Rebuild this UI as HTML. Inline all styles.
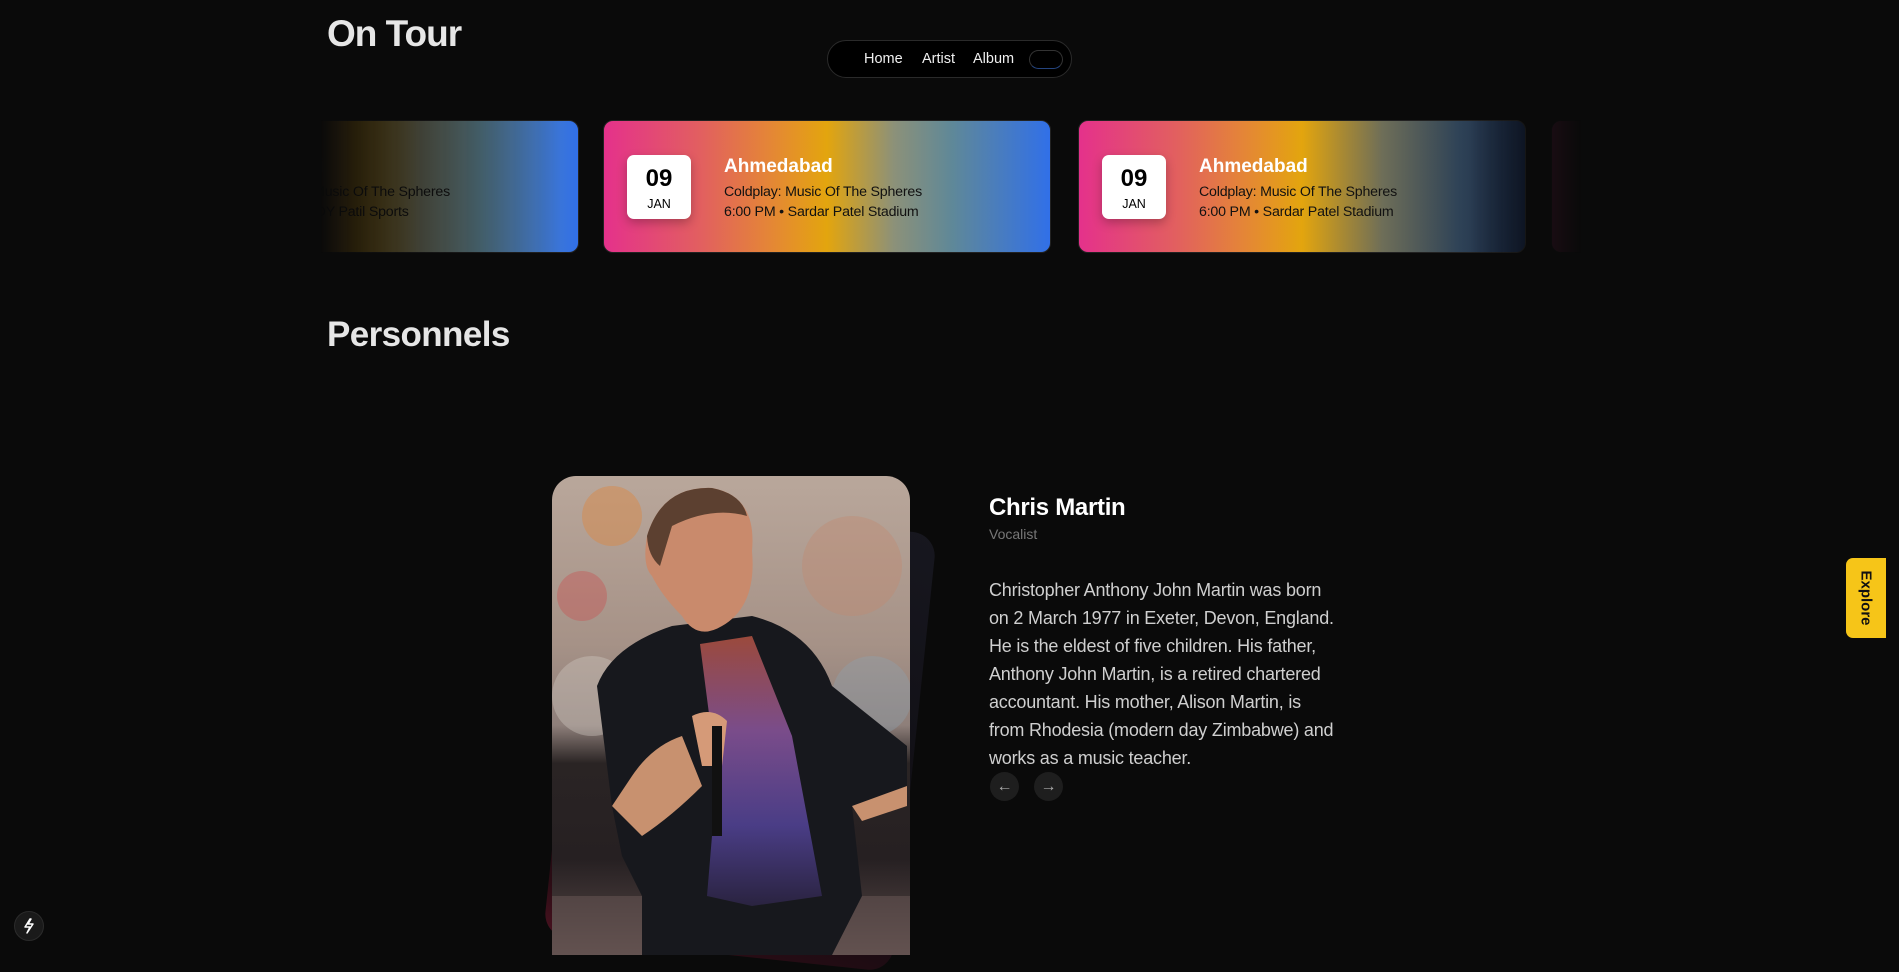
<!DOCTYPE html>
<html><head><meta charset="utf-8"><style>
*{margin:0;padding:0;box-sizing:border-box}
html,body{width:1899px;height:955px;overflow:hidden;background:#0a0a0a;font-family:"Liberation Sans",sans-serif;color:#fff}
.abs{position:absolute}
h1{position:absolute;left:327px;top:13px;font-size:37px;font-weight:700;color:#e6e6e6;letter-spacing:-1px}
h2{position:absolute;left:327px;top:315px;font-size:35px;font-weight:700;color:#e6e6e6;letter-spacing:-0.6px}
.nav{left:827px;top:40px;width:245px;height:38px;border:1px solid #2a2a2a;border-radius:20px;background:#000}
.nav span{position:absolute;top:10px;font-size:14.5px;color:#f0f0f0}
.tog{position:absolute;left:201px;top:9px;width:34px;height:19px;border:1px solid #333;border-radius:10px;background:#000;border-bottom-color:#24447f}
.strip{left:320px;top:118px;width:1262px;height:137px;overflow:hidden;-webkit-mask-image:linear-gradient(90deg,transparent 0,rgba(0,0,0,.15) 40px,#000 240px,#000 1150px,transparent 1262px);mask-image:linear-gradient(90deg,transparent 0,rgba(0,0,0,.15) 40px,#000 240px,#000 1150px,transparent 1262px)}
.card{position:absolute;top:2px;width:448px;height:133px;border-radius:10px;border:1px solid #222;background:linear-gradient(90deg,#e4318b 0%,#e2605f 22%,#e48834 38%,#e3a50e 50%,#8c9179 65%,#5f8898 78%,#3170e8 100%)}
.card.b{background:linear-gradient(90deg,#e4318b 0%,#e2605f 22%,#e48834 38%,#e3a50e 50%,#6e6e58 68%,#2f4357 85%,#13213d 100%)}
.date{position:absolute;left:23px;top:34px;width:64px;height:64px;background:#fff;border-radius:7px;text-align:center;color:#000;box-shadow:0 4px 10px rgba(0,0,0,.25)}
.date b{display:block;font-size:24px;margin-top:10px}
.date i{display:block;font-style:normal;font-size:12.5px;margin-top:4px}
.city{position:absolute;left:120px;top:35px;font-size:19px;font-weight:700;color:#fff}
.sub{position:absolute;left:120px;font-size:14.2px;color:#111;letter-spacing:-0.2px}
.name{left:989px;top:494px;font-size:24px;font-weight:700;color:#fff;letter-spacing:-0.3px}
.role{left:989px;top:526px;font-size:14px;color:#777}
.para{left:989px;top:576px;width:348px;font-size:18px;line-height:28px;color:#cfcfcf;letter-spacing:-0.2px}
.arr{top:772px;width:29px;height:29px;border-radius:50%;background:#1e1e1e;color:#aaa;font-size:16px;text-align:center;line-height:29px}
.explore{left:1846px;top:558px;width:40px;height:80px;background:#f6c518;border-radius:7px 0 0 7px}
.explore span{position:absolute;left:50%;top:50%;transform:translate(-50%,-50%) rotate(90deg);font-size:15px;font-weight:700;color:#111;white-space:nowrap}
.bolt{left:14px;top:911px;width:30px;height:30px;border-radius:50%;background:#1a1a1a;border:1px solid #2b2b2b}
</style></head><body>
<h1>On Tour</h1>
<div class="abs nav"><span style="left:36px">Home</span><span style="left:94px">Artist</span><span style="left:145px">Album</span><div class="tog"></div></div>

<div class="abs strip">
 <div class="card" style="left:-189px"><div class="date"><b>09</b><i>JAN</i></div><div class="city">Mumbai</div><div class="sub" style="top:63px">Coldplay: Music Of The Spheres</div><div class="sub" style="top:83px">6:00 PM • DY Patil Sports</div></div>
 <div class="card" style="left:283px"><div class="date"><b>09</b><i>JAN</i></div><div class="city">Ahmedabad</div><div class="sub" style="top:63px">Coldplay: Music Of The Spheres</div><div class="sub" style="top:83px">6:00 PM • Sardar Patel Stadium</div></div>
 <div class="card b" style="left:758px"><div class="date"><b>09</b><i>JAN</i></div><div class="city">Ahmedabad</div><div class="sub" style="top:63px">Coldplay: Music Of The Spheres</div><div class="sub" style="top:83px">6:00 PM • Sardar Patel Stadium</div></div>
 <div class="card" style="left:1231px;opacity:.25"></div>
</div>

<h2>Personnels</h2>

<div class="abs" style="left:565px;top:515px;width:350px;height:440px;border-radius:24px;background:linear-gradient(200deg,#17171f 0%,#0f0d12 60%,#2a0c14 90%,#4a1220 100%);transform:rotate(6deg);transform-origin:center"></div>
<svg class="abs" style="left:552px;top:476px" width="358" height="479" viewBox="0 0 358 479">
<defs>
<clipPath id="c"><path d="M24 0H334A24 24 0 0 1 358 24V479H0V24A24 24 0 0 1 24 0Z"/></clipPath>
<linearGradient id="bg" x1="0" y1="0" x2="0" y2="1"><stop offset="0" stop-color="#b9a79b"/><stop offset=".35" stop-color="#a69287"/><stop offset=".52" stop-color="#8e7f7a"/><stop offset=".6" stop-color="#2a2424"/><stop offset=".8" stop-color="#262022"/><stop offset="1" stop-color="#5a4a48"/></linearGradient>
<linearGradient id="sh" x1="0" y1="0" x2="0" y2="1"><stop offset="0" stop-color="#9b4a3c"/><stop offset=".35" stop-color="#7a4c8a"/><stop offset=".7" stop-color="#4a3d86"/><stop offset="1" stop-color="#2a2340"/></linearGradient>
</defs>
<g clip-path="url(#c)">
<rect width="358" height="479" fill="url(#bg)"/>
<circle cx="60" cy="40" r="30" fill="#d88a4a" opacity=".5"/>
<circle cx="300" cy="90" r="50" fill="#c08a70" opacity=".4"/>
<circle cx="30" cy="120" r="25" fill="#c95050" opacity=".4"/>
<circle cx="320" cy="220" r="40" fill="#8fa1ad" opacity=".4"/>
<circle cx="40" cy="220" r="40" fill="#d0c7c0" opacity=".4"/>
<rect x="0" y="420" width="358" height="60" fill="#6b5a58" opacity=".5"/>
<path d="M45 210 Q60 170 120 150 L200 140 Q260 155 280 210 L330 250 L355 270 L355 310 L330 330 L300 330 L310 420 L280 479 L90 479 L90 420 L70 380 L60 330 Z" fill="#17181d"/>
<path d="M148 168 L200 160 L240 260 L270 420 L200 430 L155 420 L165 300 Z" fill="url(#sh)"/>
<path d="M95 60 Q110 10 160 12 Q205 20 200 75 Q205 130 170 150 Q145 165 130 140 Q110 120 100 100 Q90 90 95 60 Z" fill="#c98a6c"/>
<path d="M95 60 Q110 10 160 12 Q190 18 195 40 Q160 30 120 50 L108 90 Q96 80 95 60Z" fill="#5c4030"/>
<path d="M60 330 L80 300 Q100 270 130 260 L150 310 Q120 340 90 360 Z" fill="#c8916f"/>
<path d="M140 240 Q160 230 175 245 L170 290 L150 290 Z" fill="#d59a78"/>
<rect x="160" y="250" width="10" height="110" fill="#111"/>
<path d="M300 330 L355 310 L355 330 L310 345Z" fill="#c8916f"/>
</g>
</svg>

<div class="abs name">Chris Martin</div>
<div class="abs role">Vocalist</div>
<div class="abs para">Christopher Anthony John Martin was born on 2 March 1977 in Exeter, Devon, England. He is the eldest of five children. His father, Anthony John Martin, is a retired chartered accountant. His mother, Alison Martin, is from Rhodesia (modern day Zimbabwe) and works as a music teacher.</div>
<div class="abs arr" style="left:990px">←</div>
<div class="abs arr" style="left:1034px">→</div>

<div class="abs explore"><span>Explore</span></div>
<div class="abs bolt"><svg width="28" height="28" viewBox="0 0 28 28" style="position:absolute;left:0;top:0"><path d="M15 7 L10 15 H15 L12 21 L18 12 H13 L16 7Z" fill="none" stroke="#fff" stroke-width="1.5" stroke-linejoin="round"/></svg></div>
</body></html>
